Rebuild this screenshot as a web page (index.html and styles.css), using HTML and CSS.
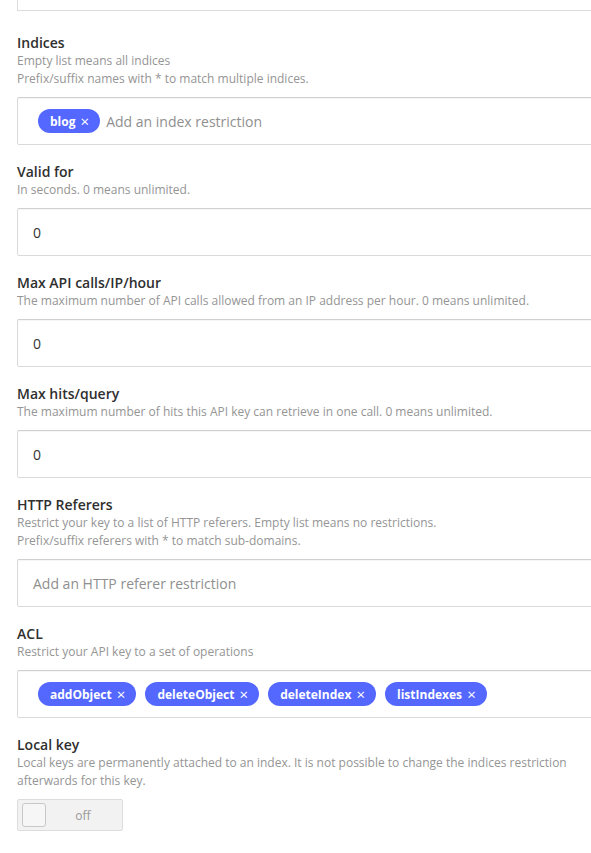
FILE: index.html
```html
<!DOCTYPE html>
<html lang="en">
<head>
<meta charset="utf-8">
<title>API key settings</title>
<link rel="stylesheet" href="styles.css">
</head>
<body>
<form class="panel">
  <div class="input-tail"></div>

  <div class="field field-first">
    <div class="label">Indices</div>
    <div class="help">Empty list means all indices</div>
    <div class="help">Prefix/suffix names with * to match multiple indices.</div>
    <div class="box tags">
      <span class="chip">blog <span class="x">×</span></span>
      <span class="placeholder">Add an index restriction</span>
    </div>
  </div>

  <div class="field">
    <div class="label">Valid for</div>
    <div class="help">In seconds. 0 means unlimited.</div>
    <div class="box text">0</div>
  </div>

  <div class="field">
    <div class="label">Max API calls/IP/hour</div>
    <div class="help">The maximum number of API calls allowed from an IP address per hour. 0 means unlimited.</div>
    <div class="box text">0</div>
  </div>

  <div class="field">
    <div class="label">Max hits/query</div>
    <div class="help">The maximum number of hits this API key can retrieve in one call. 0 means unlimited.</div>
    <div class="box text">0</div>
  </div>

  <div class="field">
    <div class="label">HTTP Referers</div>
    <div class="help">Restrict your key to a list of HTTP referers. Empty list means no restrictions.</div>
    <div class="help">Prefix/suffix referers with * to match sub-domains.</div>
    <div class="box text"><span class="placeholder">Add an HTTP referer restriction</span></div>
  </div>

  <div class="field">
    <div class="label">ACL</div>
    <div class="help">Restrict your API key to a set of operations</div>
    <div class="box tags">
      <span class="chip">addObject <span class="x">×</span></span>
      <span class="chip">deleteObject <span class="x">×</span></span>
      <span class="chip">deleteIndex <span class="x">×</span></span>
      <span class="chip">listIndexes <span class="x">×</span></span>
    </div>
  </div>

  <div class="field">
    <div class="label">Local key</div>
    <div class="help wrap">Local keys are permanently attached to an index. It is not possible to change the indices restriction afterwards for this key.</div>
    <div class="toggle">
      <span class="knob"></span>
      <span class="toggle-text">off</span>
    </div>
  </div>
</form>
</body>
</html>
```
FILE: styles.css
```css
html, body {
  margin: 0;
  padding: 0;
  overflow: hidden;
  background: #ffffff;
}

body {
  font-family: "Open Sans", "Liberation Sans", sans-serif;
  color: #333333;
}

.panel {
  padding: 0 0 22px 17px;
  border-bottom: 1px solid #e9e9e9;
  margin: 0;
}

.input-tail {
  height: 10px;
  border-left: 1px solid #dcdcdc;
  border-bottom: 1px solid #dcdcdc;
  margin-right: -30px;
}

.field {
  display: flex;
  flex-direction: column;
  margin-top: 18px;
}

.field-first {
  margin-top: 23px;
}

.label {
  font-size: 14px;
  font-weight: 600;
  line-height: 18px;
  color: #2f2f2f;
}

.help {
  font-size: 12px;
  line-height: 18px;
  color: #959595;
  white-space: nowrap;
}

.help.wrap {
  white-space: normal;
  padding-right: 20px;
}

.box {
  margin-top: 9px;
  margin-right: -30px;
  height: 48px;
  box-sizing: border-box;
  border: 1px solid #dadada;
  border-top-color: #d0d0d0;
  box-shadow: inset 0 1px 1px rgba(0, 0, 0, 0.04);
  border-radius: 2px;
  display: flex;
  align-items: center;
  background: #ffffff;
}

.text {
  padding-left: 15px;
  font-size: 14px;
  color: #333333;
}

.tags {
  padding-left: 20px;
  gap: 9px;
}

.placeholder {
  font-size: 14px;
  color: #8f8f8f;
}

.tags .placeholder {
  margin-left: -3px;
}

.chip {
  display: inline-flex;
  align-items: center;
  height: 24px;
  padding: 0 11px 0 12px;
  border-radius: 12px;
  background: #5468ff;
  color: #ffffff;
  font-size: 12px;
  font-weight: 700;
  white-space: pre;
}

.chip .x {
  font-weight: 400;
  font-size: 15px;
  line-height: 1;
  margin-left: 2px;
}

.toggle {
  margin-top: 9px;
  width: 106px;
  height: 32px;
  box-sizing: border-box;
  border: 1px solid #dddddd;
  border-radius: 2px;
  background: #f2f2f2;
  display: flex;
  align-items: center;
  padding-left: 4px;
}

.knob {
  width: 24px;
  height: 24px;
  box-sizing: border-box;
  border: 1px solid #c8c8c8;
  border-radius: 3px;
  background: #f6f6f6;
}

.toggle-text {
  flex: 1;
  text-align: center;
  font-size: 12px;
  color: #999999;
  padding-right: 2px;
}
```
